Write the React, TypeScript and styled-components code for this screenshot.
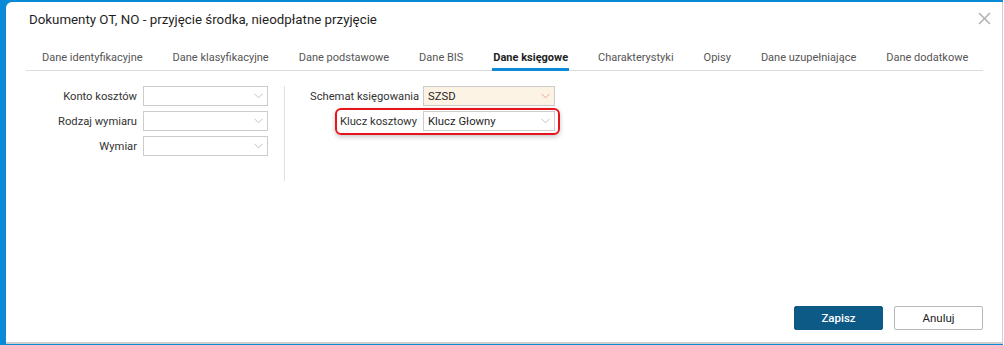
import React from "react";
import styled, { createGlobalStyle, css } from "styled-components";

const Global = createGlobalStyle`
  html, body { margin: 0; padding: 0; background: #ffffff; }
  body { font-family: Roboto, "Liberation Sans", Arial, sans-serif; }
  * { box-sizing: border-box; }
`;

const Frame = styled.div`
  width: 1003px;
  height: 345px;
  background: #0a8ad6;
  padding: 2px 0 0 6px;
`;

const Dialog = styled.div`
  width: 997px;
  height: 342px;
  background: #ffffff;
  border-top-left-radius: 6px;
  border-right: 1px solid #cfcfcf;
  border-bottom: 2px solid #cfcfcf;
  display: flex;
  flex-direction: column;
`;

const Header = styled.div`
  display: flex;
  justify-content: space-between;
  align-items: flex-start;
  padding: 9px 11px 0 23px;
`;

const Title = styled.div`
  font-size: 13.3px;
  line-height: 18px;
  color: #1f1f1f;
`;

const Close = styled.button`
  border: 0;
  background: transparent;
  padding: 0;
  margin-top: 1px;
  width: 13px;
  height: 13px;
  display: flex;
  cursor: pointer;
`;

const Tabs = styled.div`
  margin: 21px 0 0 20px;
  width: 957px;
  border-bottom: 1px solid #dcdcdc;
  display: flex;
  gap: 28px;
  padding-left: 15px;
`;

const Tab = styled.div<{ $active?: boolean }>`
  font-size: 11px;
  line-height: 16px;
  padding: 0 1px 2px;
  margin-bottom: -1px;
  border-bottom: 3px solid transparent;
  color: #555555;
  white-space: nowrap;
  ${(p) =>
    p.$active &&
    css`
      color: #1f1f1f;
      font-weight: 700;
      border-bottom-color: #0a8ad6;
    `}
`;

const Form = styled.div`
  display: flex;
  margin-top: 15px;
  padding-left: 20px;
`;

const Column = styled.div<{ $pad?: number }>`
  display: flex;
  flex-direction: column;
  gap: 5px;
  padding-left: ${(p) => p.$pad ?? 0}px;
`;

const Separator = styled.div`
  width: 1px;
  height: 95px;
  background: #e0e0e0;
  margin-left: 16px;
`;

const Row = styled.div<{ $highlight?: boolean }>`
  display: flex;
  align-items: center;
  gap: 6px;
  height: 20px;
  position: relative;
  ${(p) =>
    p.$highlight &&
    css`
      &::before {
        content: "";
        position: absolute;
        left: 25px;
        right: -5px;
        top: -3px;
        bottom: -4px;
        border: 2px solid #e8141c;
        border-radius: 6px;
        box-shadow: 0 2px 5px rgba(0, 0, 0, 0.22);
        pointer-events: none;
      }
    `}
`;

const Label = styled.div<{ $w: number }>`
  width: ${(p) => p.$w}px;
  text-align: right;
  font-size: 11.2px;
  color: #333333;
  white-space: nowrap;
`;

const Select = styled.div<{ $w: number; $tinted?: boolean }>`
  width: ${(p) => p.$w}px;
  height: 20px;
  border: 1px solid #cccccc;
  background: ${(p) => (p.$tinted ? "#fdf3e4" : "#ffffff")};
  display: flex;
  align-items: center;
  justify-content: space-between;
  padding: 0 4px 0 4px;
  font-size: 11.3px;
  color: #1f1f1f;
`;

const Footer = styled.div`
  margin-top: auto;
  display: flex;
  justify-content: flex-end;
  gap: 11px;
  padding: 0 19px 12px 0;
`;

const Button = styled.button<{ $primary?: boolean }>`
  width: 89px;
  height: 24px;
  border-radius: 2px;
  font-family: Roboto, "Liberation Sans", Arial, sans-serif;
  font-size: 11.5px;
  cursor: pointer;
  ${(p) =>
    p.$primary
      ? css`
          background: #0d5a86;
          border: 1px solid #0d5a86;
          color: #ffffff;
          font-weight: 500;
        `
      : css`
          background: #ffffff;
          border: 1px solid #b8b8b8;
          color: #222222;
        `}
`;

const Chevron = ({ color = "#c4c4c4" }: { color?: string }) => (
  <svg width="9" height="6" viewBox="0 0 9 6" style={{ flexShrink: 0 }}>
    <path d="M0.5 0.8 L4.5 4.8 L8.5 0.8" fill="none" stroke={color} strokeWidth="1" />
  </svg>
);

const tabs = [
  "Dane identyfikacyjne",
  "Dane klasyfikacyjne",
  "Dane podstawowe",
  "Dane BIS",
  "Dane księgowe",
  "Charakterystyki",
  "Opisy",
  "Dane uzupełniające",
  "Dane dodatkowe",
];

export default function App() {
  return (
    <>
      <Global />
      <Frame>
        <Dialog>
          <Header>
            <Title>Dokumenty OT, NO - przyjęcie środka, nieodpłatne przyjęcie</Title>
            <Close aria-label="Zamknij">
              <svg width="13" height="13" viewBox="0 0 13 13">
                <path d="M1 1 L12 12 M12 1 L1 12" stroke="#b0b0b0" strokeWidth="1.5" />
              </svg>
            </Close>
          </Header>
          <Tabs>
            {tabs.map((t) => (
              <Tab key={t} $active={t === "Dane księgowe"}>
                {t}
              </Tab>
            ))}
          </Tabs>
          <Form>
            <Column>
              <Row>
                <Label $w={111}>Konto kosztów</Label>
                <Select $w={125}>
                  <span />
                  <Chevron />
                </Select>
              </Row>
              <Row>
                <Label $w={111}>Rodzaj wymiaru</Label>
                <Select $w={125}>
                  <span />
                  <Chevron />
                </Select>
              </Row>
              <Row>
                <Label $w={111}>Wymiar</Label>
                <Select $w={125}>
                  <span />
                  <Chevron />
                </Select>
              </Row>
            </Column>
            <Separator />
            <Column $pad={25}>
              <Row>
                <Label $w={107}>Schemat księgowania</Label>
                <Select $w={132} $tinted>
                  <span>SZSD</span>
                  <Chevron color="#e8a890" />
                </Select>
              </Row>
              <Row $highlight>
                <Label $w={107}>Klucz kosztowy</Label>
                <Select $w={132}>
                  <span>Klucz Głowny</span>
                  <Chevron />
                </Select>
              </Row>
            </Column>
          </Form>
          <Footer>
            <Button $primary>Zapisz</Button>
            <Button>Anuluj</Button>
          </Footer>
        </Dialog>
      </Frame>
    </>
  );
}
